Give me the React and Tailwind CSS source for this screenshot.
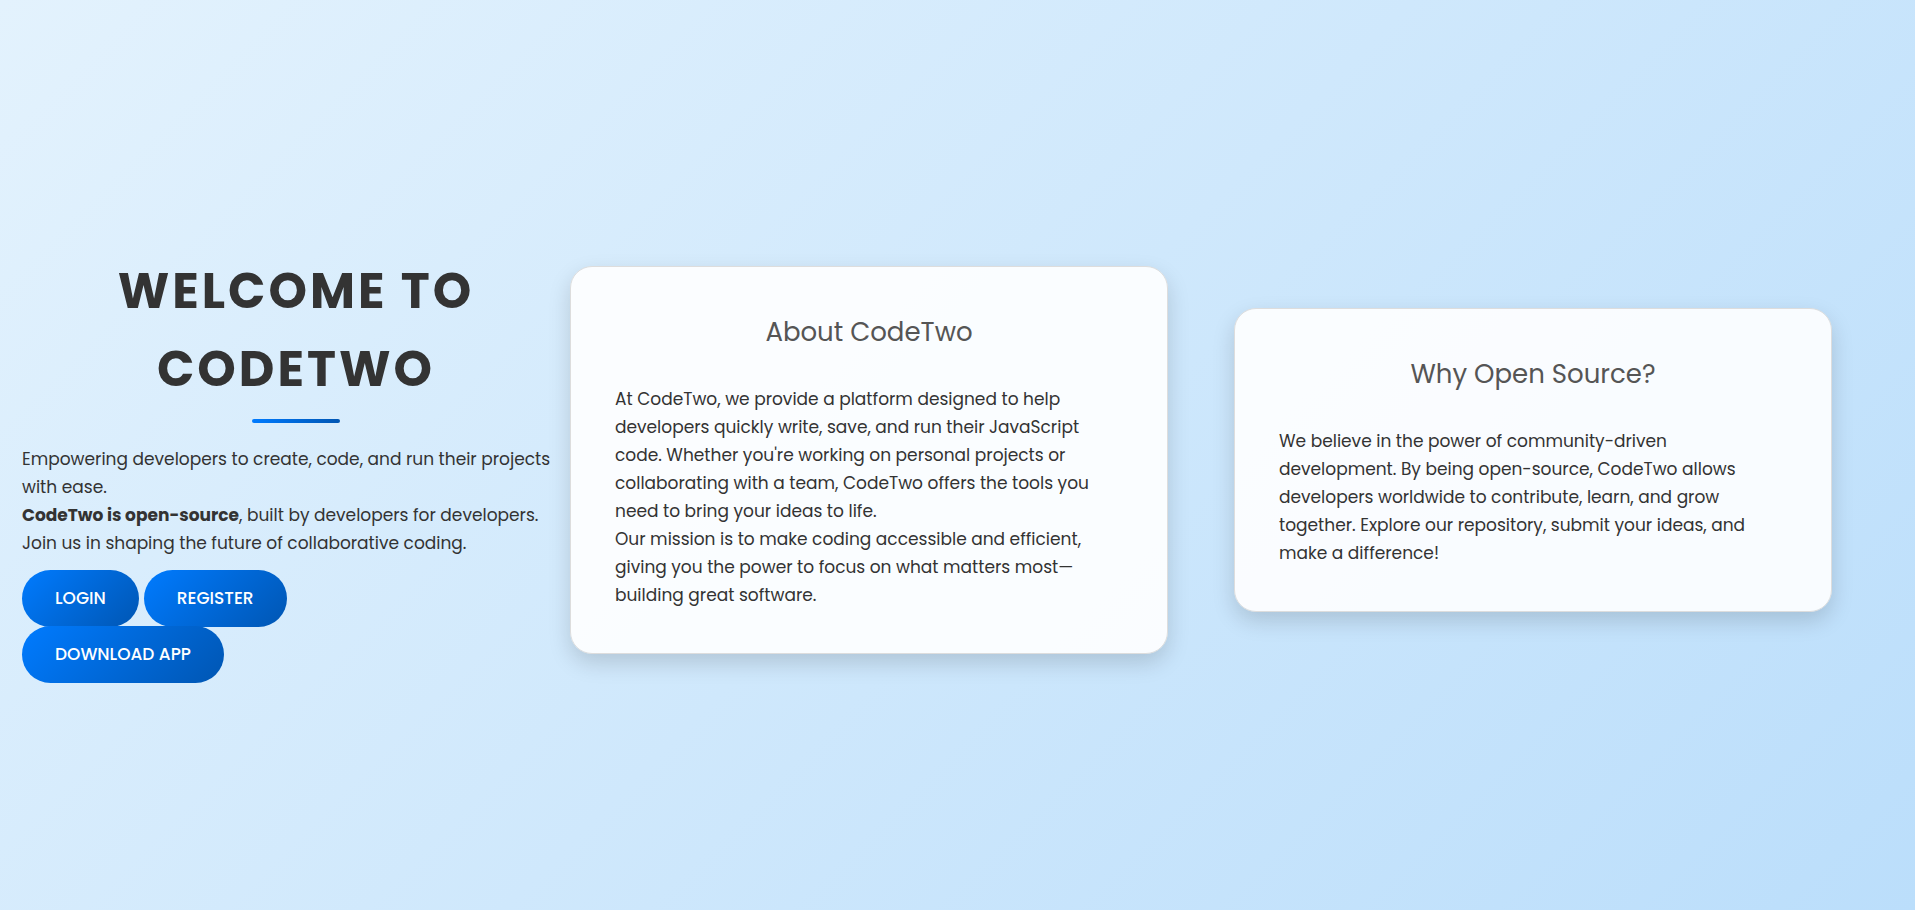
function PillLink({ href, children }) {
  return (
    <a
      href={href}
      className="flex h-[57px] items-center rounded-full bg-linear-[135deg,#007bff,#0056b3] px-[33px] text-[17px] font-medium text-white uppercase hover:brightness-110"
    >
      {children}
    </a>
  );
}

function Card({ title, children }) {
  return (
    <section className="rounded-[22px] border border-[#dddddd] bg-white/90 p-11 shadow-[0_9px_22px_rgba(0,0,0,0.15)]">
      <h2 className="mb-[31px] text-center text-[26px] leading-[43px] text-[#555555]">{title}</h2>
      {children}
    </section>
  );
}

export default function App() {
  return (
    <main className="grid min-h-screen grid-cols-[5fr_7fr] items-center bg-linear-[135deg,#e3f2fd,#bbdefb] pt-[10px] pr-[83px] pl-[22px] font-['Poppins','Inter',sans-serif] text-[17px] leading-7 text-[#333333] xl:grid-cols-[548fr_1262fr]">
      <header className="pt-[14px]">
        <h1 className="text-center text-[49px] leading-[78px] font-bold tracking-[3px] uppercase">
          Welcome to CodeTwo
        </h1>
        <div className="mx-auto mt-[11px] mb-[22px] h-1 w-[88px] rounded-sm bg-linear-to-r from-[#007bff] to-[#0056b3]" />
        <p>Empowering developers to create, code, and run their projects with ease.</p>
        <p>
          <strong className="font-bold">CodeTwo is open-source</strong>, built by developers for
          developers.
        </p>
        <p>Join us in shaping the future of collaborative coding.</p>
        <nav className="mt-[13px]">
          <div className="flex gap-[5px]">
            <PillLink href="#login">Login</PillLink>
            <PillLink href="#register">Register</PillLink>
          </div>
          <div className="-mt-px flex">
            <PillLink href="#download">Download App</PillLink>
          </div>
        </nav>
      </header>

      <div className="grid grid-cols-1 items-center gap-[66px] xl:grid-cols-2">
        <Card title="About CodeTwo">
          <p>
            At CodeTwo, we provide a platform designed to help developers quickly write, save, and
            run their JavaScript code. Whether you're working on personal projects or collaborating
            with a team, CodeTwo offers the tools you need to bring your ideas to life.
          </p>
          <p>
            Our mission is to make coding accessible and efficient, giving you the power to focus on
            what matters most—building great software.
          </p>
        </Card>

        <Card title="Why Open Source?">
          <p>
            We believe in the power of community-driven development. By being open-source, CodeTwo
            allows developers worldwide to contribute, learn, and grow together. Explore our
            repository, submit your ideas, and make a difference!
          </p>
        </Card>
      </div>
    </main>
  );
}
